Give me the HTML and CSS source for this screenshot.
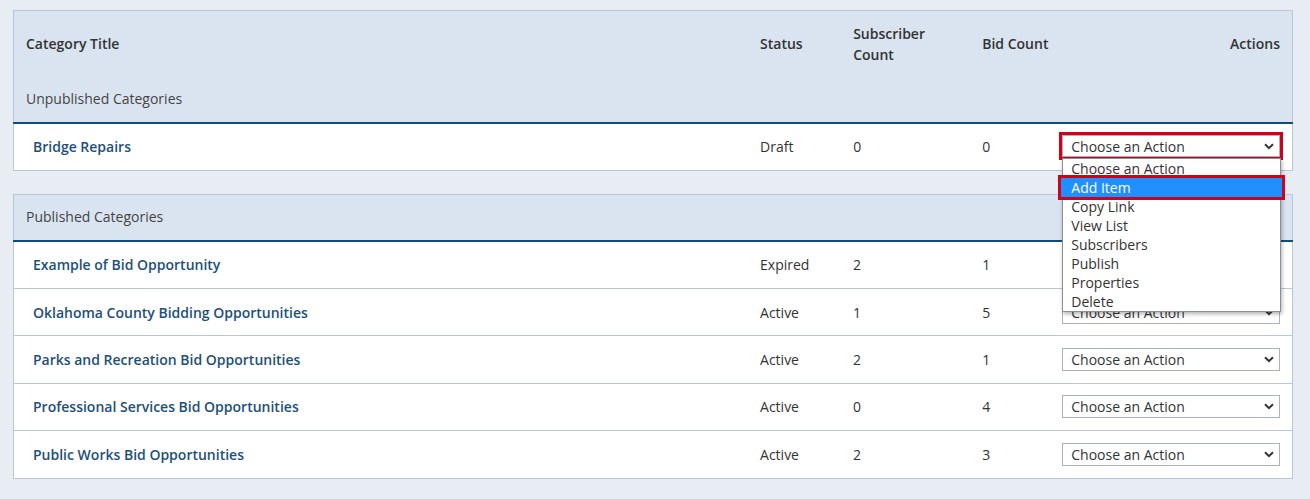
FILE: index.html
```html
<!DOCTYPE html>
<html>

<head>
    <title>Categories</title>
    <link rel="stylesheet" href="styles.css">
</head>

<body>
    <table class="cat-table">
        <colgroup>
            <col class="c-title">
            <col class="c-status">
            <col class="c-subs">
            <col class="c-bids">
            <col class="c-actions">
        </colgroup>
        <thead>
            <tr class="head-row">
                <th>Category Title</th>
                <th>Status</th>
                <th>Subscriber<br>Count</th>
                <th>Bid Count</th>
                <th class="right">Actions</th>
            </tr>
            <tr class="group-row">
                <th colspan="5">Unpublished Categories</th>
            </tr>
        </thead>
        <tbody>
            <tr class="first-group">
                <td><a href="#" class="cat-link">Bridge Repairs</a></td>
                <td>Draft</td>
                <td>0</td>
                <td>0</td>
                <td>
                    <div class="action-wrap open">
                        <select class="action-select">
                            <option>Choose an Action</option>
                        </select>
                        <svg class="chev" width="10" height="7" viewBox="0 0 10 7"><path d="M1 1.2 5 5.2 9 1.2" fill="none" stroke="#333" stroke-width="2"/></svg>
                        <ul class="action-menu">
                            <li>Choose an Action</li>
                            <li class="picked">Add Item</li>
                            <li>Copy Link</li>
                            <li>View List</li>
                            <li>Subscribers</li>
                            <li>Publish</li>
                            <li>Properties</li>
                            <li>Delete</li>
                        </ul>
                    </div>
                </td>
            </tr>
        </tbody>
    </table>

    <table class="cat-table second">
        <colgroup>
            <col class="c-title">
            <col class="c-status">
            <col class="c-subs">
            <col class="c-bids">
            <col class="c-actions">
        </colgroup>
        <thead>
            <tr class="group-row only">
                <th colspan="5">Published Categories</th>
            </tr>
        </thead>
        <tbody>
            <tr>
                <td><a href="#" class="cat-link">Example of Bid Opportunity</a></td>
                <td>Expired</td>
                <td>2</td>
                <td>1</td>
                <td>
                    <div class="action-wrap">
                        <select class="action-select"><option>Choose an Action</option></select>
                        <svg class="chev" width="10" height="7" viewBox="0 0 10 7"><path d="M1 1.2 5 5.2 9 1.2" fill="none" stroke="#333" stroke-width="2"/></svg>
                    </div>
                </td>
            </tr>
            <tr>
                <td><a href="#" class="cat-link">Oklahoma County Bidding Opportunities</a></td>
                <td>Active</td>
                <td>1</td>
                <td>5</td>
                <td>
                    <div class="action-wrap">
                        <select class="action-select"><option>Choose an Action</option></select>
                        <svg class="chev" width="10" height="7" viewBox="0 0 10 7"><path d="M1 1.2 5 5.2 9 1.2" fill="none" stroke="#333" stroke-width="2"/></svg>
                    </div>
                </td>
            </tr>
            <tr>
                <td><a href="#" class="cat-link">Parks and Recreation Bid Opportunities</a></td>
                <td>Active</td>
                <td>2</td>
                <td>1</td>
                <td>
                    <div class="action-wrap">
                        <select class="action-select"><option>Choose an Action</option></select>
                        <svg class="chev" width="10" height="7" viewBox="0 0 10 7"><path d="M1 1.2 5 5.2 9 1.2" fill="none" stroke="#333" stroke-width="2"/></svg>
                    </div>
                </td>
            </tr>
            <tr>
                <td><a href="#" class="cat-link">Professional Services Bid Opportunities</a></td>
                <td>Active</td>
                <td>0</td>
                <td>4</td>
                <td>
                    <div class="action-wrap">
                        <select class="action-select"><option>Choose an Action</option></select>
                        <svg class="chev" width="10" height="7" viewBox="0 0 10 7"><path d="M1 1.2 5 5.2 9 1.2" fill="none" stroke="#333" stroke-width="2"/></svg>
                    </div>
                </td>
            </tr>
            <tr>
                <td><a href="#" class="cat-link">Public Works Bid Opportunities</a></td>
                <td>Active</td>
                <td>2</td>
                <td>3</td>
                <td>
                    <div class="action-wrap">
                        <select class="action-select"><option>Choose an Action</option></select>
                        <svg class="chev" width="10" height="7" viewBox="0 0 10 7"><path d="M1 1.2 5 5.2 9 1.2" fill="none" stroke="#333" stroke-width="2"/></svg>
                    </div>
                </td>
            </tr>
        </tbody>
    </table>
</body>

</html>
```

FILE: styles.css
```css
body {
    margin: 0;
    padding: 10px 17px 0 13px;
    background-color: #e8edf3;
    font-family: "Open Sans", "Lato", sans-serif;
    font-size: 14px;
    color: #333;
}

.cat-table {
    width: 1280px;
    border-collapse: collapse;
    table-layout: fixed;
    background-color: #fff;
    border: 1px solid #b7c6d8;
}

.cat-table.second {
    margin-top: 23px;
}

.c-title { width: 734px; }
.c-status { width: 93px; }
.c-subs { width: 129px; }
.c-bids { width: 80px; }
.c-actions { width: 242px; }

.cat-table th,
.cat-table td {
    padding: 0 12px;
    text-align: left;
    vertical-align: middle;
    white-space: nowrap;
}

.cat-table thead {
    background-color: #dae4f0;
}

.head-row th {
    height: 65px;
    padding-bottom: 2px;
    font-weight: 600;
    line-height: 21px;
    color: #333;
}

.cat-table th.right {
    text-align: right;
}

.group-row th {
    height: 40px;
    padding-bottom: 4px;
    font-weight: 400;
    color: #444;
    border-bottom: 2px solid #0f4c7d;
}

.group-row.only th {
    height: 43px;
    padding-bottom: 2px;
}

.cat-table tbody tr {
    height: 47.4px;
    border-top: 1px solid #bcc6d2;
}

.cat-table tbody tr:first-child {
    border-top: none;
    height: 48px;
}

.cat-table tbody tr.first-group {
    height: 47px;
}

.cat-link {
    padding-left: 7px;
    color: #1d4f7c;
    font-weight: 600;
    text-decoration: none;
}

.action-wrap {
    position: relative;
    width: 218px;
    height: 23px;
}

.action-select {
    appearance: none;
    width: 218px;
    height: 23px;
    margin: 0;
    padding: 0 0 0 8px;
    border: 1px solid #a9b2bd;
    border-radius: 0;
    background-color: #fff;
    font-family: "Open Sans", "Lato", sans-serif;
    font-size: 14px;
    color: #333;
}

.chev {
    position: absolute;
    right: 6px;
    top: 8px;
    pointer-events: none;
}

/* open state of the first select, with the highlight boxes */
.action-wrap.open .action-select {
    outline: 3px solid #d0021b;
    outline-offset: 0;
    height: 22px;
}

.action-menu {
    position: absolute;
    left: 0;
    top: 23px;
    width: 217px;
    margin: 0;
    padding: 0;
    list-style: none;
    background-color: #fff;
    border: 1px solid #8a8f96;
    box-shadow: 1px 2px 4px rgba(0, 0, 0, 0.3);
    z-index: 2;
}

.action-menu li {
    height: 19px;
    line-height: 19px;
    padding-left: 8px;
    color: #333;
}

.action-menu li.picked {
    background-color: #1e90ff;
    color: #fff;
    outline: 3px solid #d0021b;
    outline-offset: 0;
    position: relative;
    margin: 0 -2px;
    padding-left: 10px;
}
```
